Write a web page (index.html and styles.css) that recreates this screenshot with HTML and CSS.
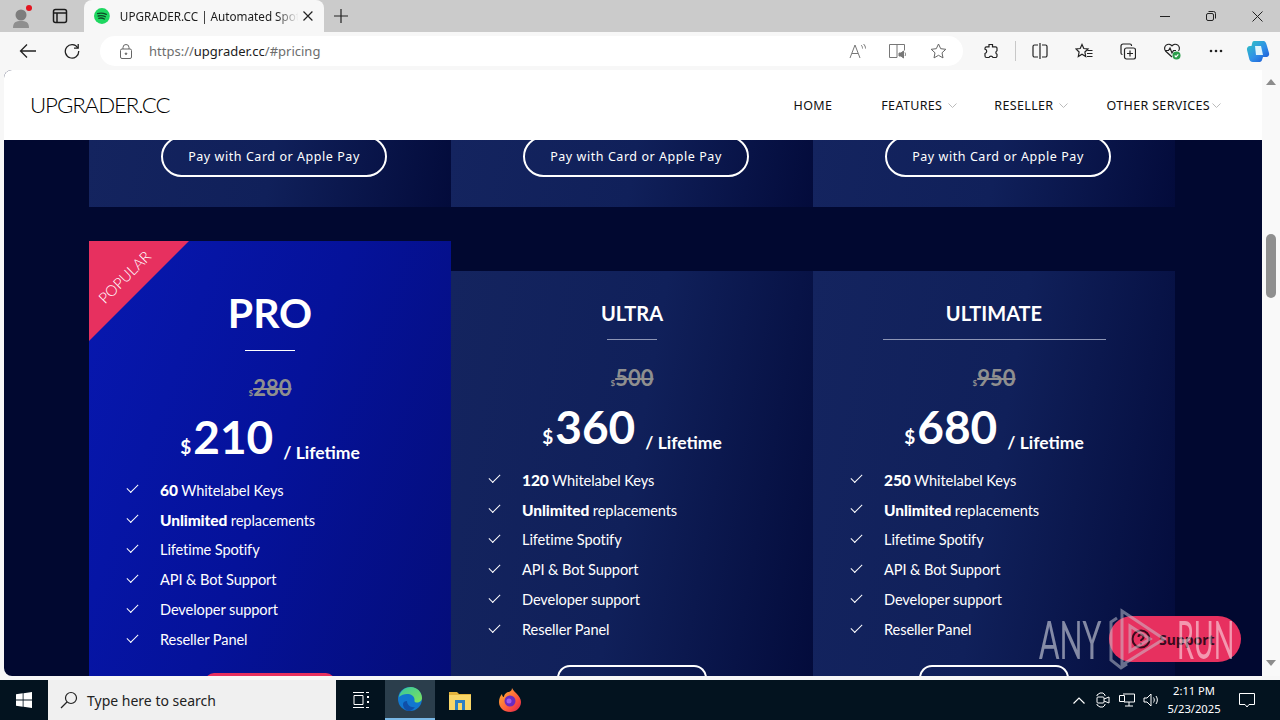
FILE: index.html
```html
<!DOCTYPE html>
<html lang="en">
<head>
  <meta charset="UTF-8" />
  <title>UPGRADER.CC | Automated Spotify</title>
  <link rel="stylesheet" href="styles.css">
</head>
<body>
  <div class="tabbar">
    <div class="profile">
      <svg width="24" height="24" viewBox="0 0 24 24"><circle cx="11" cy="11" r="5.5" fill="#7d7d7d"/><path d="M3 24c0-6 3-7 8-7s8 1 8 7z" fill="#8f8f8f"/><circle cx="19" cy="4" r="3" fill="#e3141f"/></svg>
    </div>
    <div class="tabs-btn">
      <svg width="16" height="16" viewBox="0 0 16 16" fill="none" stroke="#1c1c1c" stroke-width="1.5"><rect x="1.5" y="1.5" width="13" height="13" rx="2"/><path d="M1.5 5h13M5 5v9.5"/></svg>
    </div>
    <div class="tab">
      <svg class="tab-favicon" width="16" height="16" viewBox="0 0 16 16"><circle cx="8" cy="8" r="8" fill="#1ed760"/><path d="M3.6 5.6c3-.8 6-.6 8.8.8M4.2 8c2.5-.6 5-.4 7.3.8M4.8 10.3c2-.5 4-.3 5.8.7" fill="none" stroke="#0c4a26" stroke-width="1.3" stroke-linecap="round"/></svg>
      <span class="tab-title">UPGRADER.CC | Automated Spot</span>
      <svg width="12" height="12" viewBox="0 0 12 12" stroke="#222" stroke-width="1.2"><path d="M1.5 1.5l9 9M10.5 1.5l-9 9"/></svg>
    </div>
    <div class="new-tab">
      <svg width="14" height="14" viewBox="0 0 14 14" stroke="#222" stroke-width="1.2"><path d="M7 0v14M0 7h14"/></svg>
    </div>
    <div class="win-controls">
      <span class="win-btn"><svg width="10" height="10" viewBox="0 0 10 10" stroke="#222"><path d="M0 5.5h10"/></svg></span>
      <span class="win-btn"><svg width="10" height="10" viewBox="0 0 10 10" fill="none" stroke="#222"><rect x=".5" y="2.5" width="7" height="7" rx="1.5"/><path d="M2.5 .5h5a2 2 0 0 1 2 2v5"/></svg></span>
      <span class="win-btn"><svg width="11" height="11" viewBox="0 0 11 11" stroke="#222"><path d="M.5 .5l10 10M10.5 .5l-10 10"/></svg></span>
    </div>
  </div>

  <div class="toolbar">
    <span class="nav-btn">
      <svg width="18" height="16" viewBox="0 0 18 16" fill="none" stroke="#222" stroke-width="1.3"><path d="M17 8H1.5M8 1.5L1.5 8 8 14.5"/></svg>
    </span>
    <span class="nav-btn">
      <svg width="16" height="16" viewBox="0 0 16 16" fill="none" stroke="#222" stroke-width="1.3"><path d="M13.8 5A6.7 6.7 0 1 0 14.7 8"/><path d="M14.2 1v4.2H10"/></svg>
    </span>
    <div class="address">
      <svg class="lock" width="12" height="15" viewBox="0 0 12 15" fill="none" stroke="#666"><rect x=".5" y="5" width="11" height="9.5" rx="1.5"/><path d="M3 5V3.5a3 3 0 0 1 6 0V5"/><circle cx="6" cy="9.7" r=".8" fill="#666"/></svg>
      <span class="url">https://<b>upgrader.cc</b>/#pricing</span>
      <span class="addr-icon">
        <svg width="18" height="16" viewBox="0 0 18 16" fill="none" stroke="#777"><path d="M1 15L6 2l5 13M3 10.5h6"/><path d="M12 2c1 .8 1.5 2 1.5 3.5M14.5 1c1.3 1.2 2 2.7 2 4.5"/></svg>
      </span>
      <span class="addr-icon">
        <svg width="18" height="16" viewBox="0 0 18 16" fill="none" stroke="#777"><path d="M8 14.5H.5v-13h15v6M8 1.5v13"/><path d="M10 10h2l2.5-2v7L12 13h-2z" fill="#777"/><path d="M16 9.5c.7 1 .7 2.5 0 3.5"/></svg>
      </span>
      <span class="addr-icon">
        <svg width="17" height="16" viewBox="0 0 17 16" fill="none" stroke="#666"><path d="M8.5 1l2.2 4.7 5.1.6-3.800 3.500 1 5.100-4.500-2.600L4 14.900l1-5.100L1.200 6.300l5.100-.6z"/></svg>
      </span>
    </div>
    <div class="tools">
      <span class="tool">
        <svg width="16" height="16" viewBox="0 0 16 16" fill="none" stroke="#222" stroke-width="1.2"><path d="M6 1.5h3.5v2.300h3a1.500 1.500 0 0 1 1.500 1.500v2.400a2 2 0 0 0 0 3.600v1.700a1.500 1.500 0 0 1-1.500 1.500H10a2.200 2.200 0 0 0-4 0H3.500A1.500 1.500 0 0 1 2 13V10.500a2.200 2.200 0 0 0 0-4.300V5.300a1.500 1.500 0 0 1 1.500-1.500H6z"/></svg>
      </span>
      <span class="tool-sep"></span>
      <span class="tool">
        <svg width="16" height="16" viewBox="0 0 16 16" fill="none" stroke="#222" stroke-width="1.2"><path d="M8 0v16M6 2H2.500A1.500 1.500 0 0 0 1 3.500v9A1.500 1.500 0 0 0 2.500 14H6M10 2h3.500A1.500 1.500 0 0 1 15 3.500v9a1.500 1.500 0 0 1-1.500 1.500H10"/></svg>
      </span>
      <span class="tool">
        <svg width="18" height="16" viewBox="0 0 18 16" fill="none" stroke="#222" stroke-width="1.2"><path d="M7 1.500l1.800 4 4.200.5-3.100 3 .8 4.500L7 11.300 3.300 13.500l.8-4.500L1 6l4.200-.5zM12.500 7.500h5M12 10.500h5.500M12 13.500h5.500"/></svg>
      </span>
      <span class="tool">
        <svg width="16" height="17" viewBox="0 0 16 17" fill="none" stroke="#222" stroke-width="1.2"><rect x="4.5" y="5" width="11" height="11" rx="2"/><path d="M10 7.500v6M7 10.500h6M11.500 3V2.500A1.500 1.500 0 0 0 10 1H3a2 2 0 0 0-2 2v7a1.500 1.500 0 0 0 1.500 1.500"/></svg>
      </span>
      <span class="tool">
        <svg width="18" height="18" viewBox="0 0 18 18" fill="none" stroke="#222" stroke-width="1.2"><path d="M9 15L2.500 9A4 4 0 0 1 9 3.800 4 4 0 0 1 15.500 9"/><path d="M2 8.500h3.500L7 6l2 5 1.500-2.500H13"/><circle cx="13.5" cy="13.5" r="4" fill="#2c9e4b" stroke="none"/><path d="M11.700 13.500l1.300 1.300 2.300-2.500" stroke="#fff"/></svg>
      </span>
      <span class="tool">
        <svg width="14" height="4" viewBox="0 0 14 4" fill="#222"><circle cx="2" cy="2" r="1.3"/><circle cx="7" cy="2" r="1.3"/><circle cx="12" cy="2" r="1.3"/></svg>
      </span>
      <span class="copilot">
        <svg width="24" height="24" viewBox="0 0 24 24"><defs><linearGradient id="cop" x1="0" y1="0" x2="1" y2="1"><stop offset="0" stop-color="#2fc6c0"/><stop offset=".55" stop-color="#2f8fe8"/><stop offset="1" stop-color="#1b4fd0"/></linearGradient></defs><path d="M8 2h9c2.500 0 3 1.500 4 5l2 7c.7 2.500-1 4-3 4h-3l-1 3c-.5 1.500-1.500 2-3 2H7c-2.500 0-3.500-1.500-4-4L1 11C.5 9 2 7 4 7h1.500l.7-3C6.500 2.800 7 2 8 2z" fill="url(#cop)"/><path d="M9 7h6l2 9h-7z" fill="#dff4fb"/></svg>
      </span>
    </div>
  </div>

  <div class="window">
    <div class="page">
      <header class="site-header">
        <div class="logo">UPGRADER.CC</div>
        <nav class="site-nav">
          <a class="nav-home">HOME</a>
          <a class="nav-features">FEATURES<svg width="9" height="5" viewBox="0 0 9 5" fill="none" stroke="#bbb"><path d="M.5 .5l4 4 4-4"/></svg></a>
          <a class="nav-reseller">RESELLER<svg width="9" height="5" viewBox="0 0 9 5" fill="none" stroke="#bbb"><path d="M.5 .5l4 4 4-4"/></svg></a>
          <a class="nav-other">OTHER SERVICES<svg width="9" height="5" viewBox="0 0 9 5" fill="none" stroke="#bbb"><path d="M.5 .5l4 4 4-4"/></svg></a>
        </nav>
      </header>

      <div class="pricing">
        <div class="row row-top">
          <div class="stub"><a class="pay-btn">Pay with Card or Apple Pay</a></div>
          <div class="stub"><a class="pay-btn">Pay with Card or Apple Pay</a></div>
          <div class="stub"><a class="pay-btn">Pay with Card or Apple Pay</a></div>
        </div>

        <div class="row row-plans">
          <div class="plan plan-pro">
            <div class="ribbon"></div>
            <span class="ribbon-text">POPULAR</span>
            <h2 class="plan-name">PRO</h2>
            <div class="rule"></div>
            <div class="old-price"><small>$</small><s>280</s></div>
            <div class="price"><span class="cur">$</span><span class="amount">210</span><span class="per">/ Lifetime</span></div>
            <ul class="features">
              <li><b>60</b> Whitelabel Keys</li>
              <li><b>Unlimited</b> replacements</li>
              <li>Lifetime Spotify</li>
              <li>API &amp; Bot Support</li>
              <li>Developer support</li>
              <li>Reseller Panel</li>
            </ul>
            <a class="buy-btn buy-pink"></a>
          </div>

          <div class="plan">
            <h2 class="plan-name">ULTRA</h2>
            <div class="rule"></div>
            <div class="old-price"><small>$</small><s>500</s></div>
            <div class="price"><span class="cur">$</span><span class="amount">360</span><span class="per">/ Lifetime</span></div>
            <ul class="features">
              <li><b>120</b> Whitelabel Keys</li>
              <li><b>Unlimited</b> replacements</li>
              <li>Lifetime Spotify</li>
              <li>API &amp; Bot Support</li>
              <li>Developer support</li>
              <li>Reseller Panel</li>
            </ul>
            <a class="buy-btn"></a>
          </div>

          <div class="plan">
            <h2 class="plan-name">ULTIMATE</h2>
            <div class="rule rule-wide"></div>
            <div class="old-price"><small>$</small><s>950</s></div>
            <div class="price"><span class="cur">$</span><span class="amount">680</span><span class="per">/ Lifetime</span></div>
            <ul class="features">
              <li><b>250</b> Whitelabel Keys</li>
              <li><b>Unlimited</b> replacements</li>
              <li>Lifetime Spotify</li>
              <li>API &amp; Bot Support</li>
              <li>Developer support</li>
              <li>Reseller Panel</li>
            </ul>
            <a class="buy-btn"></a>
          </div>
        </div>
      </div>

      <a class="support">
        <svg width="20" height="20" viewBox="0 0 20 20" fill="none" stroke="#3a0a1c" stroke-width="2"><circle cx="10" cy="10" r="8.5"/><path d="M7.5 8a2.500 2.500 0 1 1 3.500 2.300c-.7.300-1 .8-1 1.700M10 14v1.500"/></svg>
        <span>Support</span>
      </a>
      <div class="watermark">
        <span class="wm-text">ANY</span>
        <svg width="58" height="62" viewBox="0 0 58 62" fill="none" stroke="#c9ccd6" stroke-width="3"><path d="M8 10L2 14v38l10 8 6-4"/><path d="M13 3l42 28-42 26z"/><path d="M21 18l20 13-20 12z"/></svg>
        <span class="wm-text wm-run">RUN</span>
      </div>
    </div>

    <div class="scrollbar">
      <svg width="10" height="6" viewBox="0 0 10 6" fill="#8c8c8c"><path d="M5 0l5 6H0z"/></svg>
      <div class="thumb"></div>
      <svg class="arrow-down" width="10" height="6" viewBox="0 0 10 6" fill="#8c8c8c"><path d="M5 6L0 0h10z"/></svg>
    </div>
  </div>

  <footer class="taskbar">
    <span class="start">
      <svg width="16" height="16" viewBox="0 0 16 16" fill="#fff"><path d="M0 2.300L6.700 1.300V7.600H0zM7.500 1.200L16 0V7.600H7.500zM0 8.400H6.700V14.700L0 13.700zM7.500 8.400H16V16L7.500 14.800z"/></svg>
    </span>
    <div class="search">
      <svg width="18" height="18" viewBox="0 0 18 18" fill="none" stroke="#222" stroke-width="1.2"><circle cx="11" cy="7" r="5.5"/><path d="M7 11l-6 6"/></svg>
      <span>Type here to search</span>
    </div>
    <span class="task task-view">
      <svg width="16" height="16" viewBox="0 0 16 16" fill="none" stroke="#fff"><path d="M0 .5h11M0 15.500h11M1 3.500h9v9H1zM13 .5h3M13 15.500h3"/><path d="M14 4h2v2h-2zM14 9h2v2h-2z" fill="#fff" stroke="none"/></svg>
    </span>
    <span class="task task-active">
      <svg width="24" height="24" viewBox="0 0 24 24"><defs><linearGradient id="edge1" x1="0" y1="0" x2="1" y2="1"><stop offset="0" stop-color="#37c6a0"/><stop offset="1" stop-color="#7fe35a"/></linearGradient></defs><circle cx="12" cy="12" r="12" fill="#1277cf"/><path d="M1 10C2 4 7 0 13 0c6 0 11 5 11 11 0 3-3 5-6 4.500-2-.3-1.500-2-1.500-3C16.500 9 13 7 9 7c-3 0-6 1-8 3z" fill="url(#edge1)"/><path d="M9 14c0 4 4 7 8 6-2 2.500-4 4-6 4-3 0-6-3-6-7 0-2 2-3 4-3z" fill="#0f4fa8"/></svg>
    </span>
    <span class="task">
      <svg width="22" height="20" viewBox="0 0 22 20"><path d="M0 2h8l2 2h12v4H0z" fill="#e3b33c"/><rect y="5" width="22" height="15" fill="#f9d668"/><rect x="6" y="10" width="10" height="3" fill="#2d7fc4"/><rect x="6" y="13" width="3" height="7" fill="#2d7fc4"/><rect x="13" y="13" width="3" height="7" fill="#2d7fc4"/></svg>
    </span>
    <span class="task">
      <svg width="22" height="24" viewBox="0 0 22 24"><defs><linearGradient id="fx" x1="0" y1="0" x2="1" y2="1"><stop offset="0" stop-color="#ffbd2e"/><stop offset=".6" stop-color="#ff5a3c"/><stop offset="1" stop-color="#e0204f"/></linearGradient></defs><path d="M13 0c1 2 2 3 4 5 3 3 5 6 5 9 0 6-5 10-11 10S0 20 0 14c0-3 1-6 3-8 0 2 1 3 2 3 0-3 3-5 5-5 2-1 3-2 3-4z" fill="url(#fx)"/><circle cx="11" cy="13" r="5.5" fill="#6a2bc0"/><circle cx="10" cy="13" r="2.5" fill="#a45ae8"/></svg>
    </span>
    <div class="tray">
      <span class="tray-icon"><svg width="12" height="7" viewBox="0 0 12 7" fill="none" stroke="#fff" stroke-width="1.2"><path d="M.5 6.500L6 1l5.500 5.500"/></svg></span>
      <span class="tray-icon"><svg width="14" height="16" viewBox="0 0 14 16" fill="none" stroke="#fff"><path d="M1 4V3l3-2h3l2 2v1M1 12v1l3 2h3l2-2v-1"/><rect x="1" y="5" width="7" height="6" rx="1"/><path d="M8 7l5-2v6l-5-2"/></svg></span>
      <span class="tray-icon"><svg width="16" height="14" viewBox="0 0 16 14" fill="none" stroke="#fff"><path d="M4 1h11.500v8H5M10 9v4M6 13h8M.5 2.500h5v6h-5z"/></svg></span>
      <span class="tray-icon"><svg width="16" height="14" viewBox="0 0 16 14" fill="none" stroke="#fff"><path d="M1 5h3l4-4v12l-4-4H1zM10.500 4.500c1 1.500 1 3.500 0 5M13 3c1.800 2.500 1.800 5.500 0 8"/></svg></span>
      <div class="clock"><div>2:11 PM</div><div>5/23/2025</div></div>
      <span class="notif"><svg width="16" height="15" viewBox="0 0 16 15" fill="none" stroke="#fff"><path d="M.5 .5h15v11h-5.500l-2 2.500-2-2.500H.5z"/></svg></span>
    </div>
  </footer>
</body>
</html>
```

FILE: styles.css
```css
html, body {
  margin: 0;
  height: 100%;
  overflow: hidden;
}

body {
  display: flex;
  flex-direction: column;
  background-color: #f7f7f7;
  font-family: "Lato", "Noto Sans", sans-serif;
}

/* browser chrome */
.tabbar {
  height: 32px;
  display: flex;
  align-items: flex-end;
  background-color: #cbcbcb;
}

.profile {
  width: 44px;
  height: 32px;
  display: flex;
  justify-content: center;
  align-items: center;
}

.tabs-btn {
  width: 32px;
  height: 32px;
  display: flex;
  justify-content: center;
  align-items: center;
}

.tab {
  width: 240px;
  height: 32px;
  margin-left: 8px;
  padding: 0 10px;
  box-sizing: border-box;
  display: flex;
  align-items: center;
  background-color: #f7f7f7;
  border-radius: 8px 8px 0 0;
  font-family: "Noto Sans", sans-serif;
  font-size: 11.7px;
  color: #1c1c1c;
}

.tab-title {
  width: 184px;
  margin-left: 10px;
  white-space: nowrap;
  -webkit-mask-image: linear-gradient(to right, #000 86%, transparent 98%);
  mask-image: linear-gradient(to right, #000 86%, transparent 98%);
}

.new-tab {
  width: 34px;
  height: 32px;
  display: flex;
  justify-content: center;
  align-items: center;
}

.win-controls {
  margin-left: auto;
  display: flex;
  height: 32px;
}

.win-btn {
  width: 46px;
  display: flex;
  justify-content: center;
  align-items: center;
}

.toolbar {
  height: 38px;
  display: flex;
  align-items: center;
  background-color: #f7f7f7;
}

.nav-btn {
  width: 44px;
  display: flex;
  justify-content: center;
}

.nav-btn:first-child {
  margin-left: 6px;
}

.address {
  width: 863px;
  height: 30px;
  margin-left: 6px;
  display: flex;
  align-items: center;
  background-color: #fff;
  border-radius: 15px;
}

.lock {
  margin-left: 20px;
}

.url {
  margin-left: 17px;
  margin-right: auto;
  font-family: "Noto Sans", sans-serif;
  font-size: 13px;
  color: #6d6d6d;
}

.url b {
  font-weight: 400;
  color: #1c1c1c;
}

.addr-icon {
  width: 40px;
  display: flex;
  justify-content: center;
}

.addr-icon:last-child {
  margin-right: 5px;
}

.tools {
  display: flex;
  align-items: center;
  margin-left: 6px;
}

.tool {
  width: 44px;
  display: flex;
  justify-content: center;
}

.tool-sep {
  width: 1px;
  height: 20px;
  margin: 0 2px;
  background-color: #c8c8c8;
}

.copilot {
  width: 40px;
  display: flex;
  justify-content: center;
}

/* page viewport */
.window {
  height: 606px;
  padding-left: 4px;
  display: flex;
}

.page {
  position: relative;
  width: 1258px;
  height: 606px;
  overflow: hidden;
  background-color: #010830;
  border-radius: 8px 0 0 8px;
}

.site-header {
  height: 70px;
  padding-left: 26px;
  display: flex;
  align-items: center;
  background-color: #fff;
}

.logo {
  margin-top: -1px;
  font-size: 22.3px;
  font-weight: 300;
  letter-spacing: -1.1px;
  color: #000;
}

.site-nav {
  margin-left: auto;
  margin-right: 41px;
  display: flex;
  font-family: "Noto Sans", sans-serif;
  font-size: 12.5px;
  letter-spacing: .35px;
  color: #111;
}

.site-nav a {
  display: flex;
  align-items: center;
  gap: 6px;
}

.nav-home { margin-right: 49px; }
.nav-features { margin-right: 37px; }
.nav-reseller { margin-right: 38px; }
.nav-other { gap: 2px !important; }

.pricing {
  padding: 0 87px 0 85px;
}

.row {
  display: flex;
}

.stub {
  width: 362px;
  height: 67px;
  text-align: center;
  background: linear-gradient(100deg, #14245f 0%, #10205a 50%, #030b3b 100%);
}

.pay-btn {
  display: inline-block;
  box-sizing: border-box;
  width: 226px;
  height: 41px;
  margin: -4px 0 0 8px;
  line-height: 37px;
  border: 2px solid #fff;
  border-radius: 21px;
  font-family: "Noto Sans", sans-serif;
  font-size: 12.5px;
  letter-spacing: .55px;
  color: #fff;
  white-space: nowrap;
}

.row-plans {
  margin-top: 34px;
  align-items: flex-start;
}

.plan {
  position: relative;
  width: 362px;
  height: 420px;
  margin-top: 30px;
  padding-top: 27px;
  box-sizing: border-box;
  display: flex;
  flex-direction: column;
  align-items: center;
  color: #fff;
  background: linear-gradient(100deg, #14245f 0%, #10205a 50%, #030b3b 100%);
}

.plan-pro {
  height: 450px;
  margin-top: 0;
  padding-top: 47px;
  background: linear-gradient(110deg, #0718b0 0%, #05129a 50%, #040d78 100%);
}

.ribbon {
  position: absolute;
  top: 0;
  left: 0;
  width: 0;
  height: 0;
  border-top: 100px solid #e7305f;
  border-right: 100px solid transparent;
}

.ribbon-text {
  position: absolute;
  top: 27px;
  left: 2px;
  font-size: 15px;
  font-weight: 300;
  transform: rotate(-45deg);
  width: 66px;
  white-space: nowrap;
}

.plan-name {
  margin: 0;
  font-size: 20px;
  line-height: 30px;
  font-weight: 700;
}

.plan-pro .plan-name {
  font-size: 41px;
  line-height: 50px;
}

.rule {
  width: 50px;
  height: 1px;
  margin-top: 11px;
  background-color: #8d95b5;
}

.plan-pro .rule {
  margin-top: 12px;
  background-color: #fff;
}

.rule-wide {
  width: 223px;
}

.old-price {
  margin-top: 24px;
  height: 28px;
  color: #8f8f8f;
  font-size: 22px;
  line-height: 28px;
  font-weight: 700;
}

.old-price small {
  font-size: 8px;
}

.price {
  margin-top: 7px;
  height: 56px;
  display: flex;
  align-items: baseline;
  font-weight: 700;
}

.cur {
  font-size: 19px;
  margin-right: 2px;
}

.amount {
  font-size: 46px;
  line-height: 56px;
}

.per {
  align-self: flex-end;
  margin-left: 10px;
  font-size: 17.5px;
  line-height: 24px;
}

.features {
  width: 100%;
  margin: 10px 0 0;
  padding: 0 0 0 71px;
  box-sizing: border-box;
  list-style: none;
}

.features li {
  position: relative;
  height: 30px;
  line-height: 30px;
  font-size: 14.6px;
  letter-spacing: -.1px;
}

.features li b {
  font-size: 15.5px;
  font-weight: 900;
}

.features li::before {
  content: "";
  position: absolute;
  left: -33px;
  top: 9px;
  width: 10px;
  height: 5px;
  border-left: 1.5px solid #fff;
  border-bottom: 1.5px solid #fff;
  transform: rotate(-45deg);
}

.buy-btn {
  width: 150px;
  height: 40px;
  margin-top: 20px;
  box-sizing: border-box;
  border: 2px solid #fff;
  border-radius: 20px;
}

.buy-pink {
  width: 130px;
  margin-top: 18px;
  border: 0;
  background-color: #e7305f;
}

.support {
  position: absolute;
  left: 1105px;
  top: 546px;
  width: 132px;
  height: 46px;
  display: flex;
  align-items: center;
  gap: 8px;
  padding-left: 22px;
  box-sizing: border-box;
  background-color: #e7305f;
  border-radius: 23px;
  font-family: "Noto Sans", sans-serif;
  font-size: 14px;
  font-weight: 700;
  color: #3a0a1c;
}

.watermark {
  position: absolute;
  left: 1035px;
  top: 538px;
  display: flex;
  align-items: center;
  gap: 10px;
  font-family: "Lato", sans-serif;
  font-size: 52px;
  color: #fff;
  opacity: .5;
}

.wm-text {
  width: 60px;
  transform: scaleX(.58);
  transform-origin: left center;
  white-space: nowrap;
}

.wm-run {
  transform: scaleX(.52);
}

.scrollbar {
  flex: 1;
  display: flex;
  flex-direction: column;
  align-items: center;
  padding-top: 9px;
  background-color: #f9f9f9;
}

.thumb {
  width: 10px;
  height: 64px;
  margin-top: 149px;
  background-color: #8f8f8f;
  border-radius: 5px;
}

.arrow-down {
  margin-top: auto;
  margin-bottom: 10px;
}

/* taskbar */
.taskbar {
  height: 40px;
  margin-top: 4px;
  display: flex;
  align-items: center;
  background-color: #03131f;
}

.start {
  width: 48px;
  display: flex;
  justify-content: center;
}

.search {
  width: 288px;
  height: 40px;
  padding-left: 12px;
  box-sizing: border-box;
  display: flex;
  align-items: center;
  gap: 9px;
  background-color: #f0f0f0;
  font-family: "Noto Sans", sans-serif;
  font-size: 14px;
  color: #222;
}

.task {
  width: 50px;
  height: 40px;
  display: flex;
  justify-content: center;
  align-items: center;
  box-sizing: border-box;
}

.task-view {
  width: 49px;
}

.task-active {
  background-color: #2b3e4c;
  border-bottom: 2px solid #79b8e6;
}

.tray {
  margin-left: auto;
  display: flex;
  align-items: center;
  color: #fff;
}

.tray-icon {
  width: 24px;
  display: flex;
  justify-content: center;
}

.clock {
  width: 62px;
  text-align: center;
  font-family: "Noto Sans", sans-serif;
  font-size: 11.2px;
  line-height: 18px;
}

.notif {
  width: 44px;
  margin-right: 11px;
  display: flex;
  justify-content: center;
}
```
